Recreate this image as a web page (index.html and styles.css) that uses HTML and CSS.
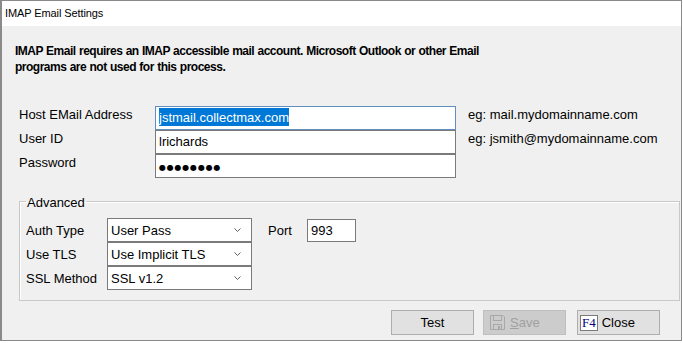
FILE: index.html
```html
<!DOCTYPE html>
<html lang="en">
<head>
    <meta charset="UTF-8">
    <title>IMAP Email Settings</title>
    <link rel="stylesheet" href="styles.css">
</head>
<body>
<div class="window">
    <div class="titlebar">IMAP Email Settings</div>
    <div class="content">
        <p class="intro">IMAP Email requires an IMAP accessible mail account. Microsoft Outlook or other Email<br>programs are not used for this process.</p>

        <div class="fields">
            <div class="row">
                <div class="label">Host EMail Address</div>
                <div class="edit focused"><span class="sel">jstmail.collectmax.com</span></div>
                <div class="hint">eg: mail.mydomainname.com</div>
            </div>
            <div class="row">
                <div class="label">User ID</div>
                <div class="edit">lrichards</div>
                <div class="hint">eg: jsmith@mydomainname.com</div>
            </div>
            <div class="row">
                <div class="label">Password</div>
                <div class="edit"><span class="dots">●●●●●●●●</span></div>
            </div>
        </div>

        <fieldset class="group">
            <legend>Advanced</legend>
            <div class="arow">
                <div class="alabel">Auth Type</div>
                <div class="combo"><span>User Pass</span><svg width="7" height="4" viewBox="0 0 7 4"><polyline points="0.5,0.5 3.5,3.5 6.5,0.5" fill="none" stroke="#606060" stroke-width="1"/></svg></div>
                <div class="plabel">Port</div>
                <div class="port">993</div>
            </div>
            <div class="arow">
                <div class="alabel">Use TLS</div>
                <div class="combo"><span>Use Implicit TLS</span><svg width="7" height="4" viewBox="0 0 7 4"><polyline points="0.5,0.5 3.5,3.5 6.5,0.5" fill="none" stroke="#606060" stroke-width="1"/></svg></div>
            </div>
            <div class="arow">
                <div class="alabel">SSL Method</div>
                <div class="combo"><span>SSL v1.2</span><svg width="7" height="4" viewBox="0 0 7 4"><polyline points="0.5,0.5 3.5,3.5 6.5,0.5" fill="none" stroke="#606060" stroke-width="1"/></svg></div>
            </div>
        </fieldset>

        <div class="buttons">
            <div class="btn test">Test</div>
            <div class="btn save disabled">
                <svg width="15" height="15" viewBox="0 0 15 15">
                    <path d="M0.5,0.5 H13 L14.5,2 V14.5 H0.5 Z" fill="none" stroke="#a8a8a8"/>
                    <rect x="3.5" y="0.5" width="8" height="5" fill="none" stroke="#a8a8a8"/>
                    <rect x="3.5" y="9.5" width="8" height="5" fill="none" stroke="#a8a8a8"/>
                    <rect x="8" y="11" width="2" height="3" fill="#a8a8a8"/>
                </svg>
                <span><u>S</u>ave</span>
            </div>
            <div class="btn close"><span class="key">F4</span><span>Close</span></div>
        </div>
    </div>
</div>
</body>
</html>
```

FILE: styles.css
```css
body{margin:0;background:#fff;font-family:"Liberation Sans",Arial,sans-serif;font-size:13px;color:#000;}
.window{width:679px;height:339px;border:1px solid #8a8a8a;border-left:2px solid #8a8a8a;background:#f0f0f0;display:flex;flex-direction:column;}
.titlebar{height:25px;background:#fff;font-size:11px;line-height:25px;padding-left:3px;letter-spacing:-0.1px;}
.content{flex:1;display:flex;flex-direction:column;}

.intro{margin:17px 0 0 13px;font-weight:bold;font-size:12px;line-height:16px;letter-spacing:-0.5px;word-spacing:0.5px;}

.fields{margin:31px 0 0 17px;}
.row{display:flex;height:24px;}
.label{width:136px;line-height:16px;padding-top:1px;}
.edit{width:296px;height:22px;border:1px solid #7a7a7a;background:#fff;line-height:22px;padding-left:3px;box-sizing:content-box;}
.edit.focused{border-color:#5f8ebf;}
.sel{background:#0078d7;color:#fff;padding:2px 0 1px;}
.dots{font-family:"DejaVu Sans",sans-serif;font-size:8px;letter-spacing:0.8px;}
.hint{margin-left:12px;line-height:16px;padding-top:1px;}

.group{margin:13px 0 0 17px;width:647px;padding:7px 6px 10px;border:1px solid #c8c8c8;box-shadow:inset 1px 1px 0 #fff;}
.group legend{padding:4px 1px 0;line-height:16px;}
.arow{display:flex;align-items:center;height:24px;}
.alabel{width:81px;}
.combo{height:22px;border:1px solid #7a7a7a;background:#fff;display:flex;align-items:center;justify-content:space-between;padding:0 10px 0 3px;box-sizing:content-box;width:130px;}
.plabel{margin-left:16px;width:39px;}
.port{width:44px;height:21px;border:1px solid #7a7a7a;background:#fff;padding-left:3px;line-height:21px;}

.buttons{display:flex;justify-content:flex-end;margin-top:9px;padding-right:21px;}
.btn{width:81px;height:23px;border:1px solid #adadad;background:#e1e1e1;display:flex;align-items:center;justify-content:center;gap:5px;}
.btn.test{margin-right:9px;}
.btn.save{margin-right:11px;justify-content:flex-start;}
.btn.save svg{margin-left:6px;}
.btn.disabled{background:#cccccc;border-color:#bfbfbf;color:#a0a0a0;}
.btn.close{justify-content:flex-start;gap:4px;}
.key{margin-left:2px;border:1px solid #7a7a7a;background:#fff;color:#000080;font-family:"Liberation Serif",serif;font-size:13px;line-height:14px;padding:0 1px;}
```
